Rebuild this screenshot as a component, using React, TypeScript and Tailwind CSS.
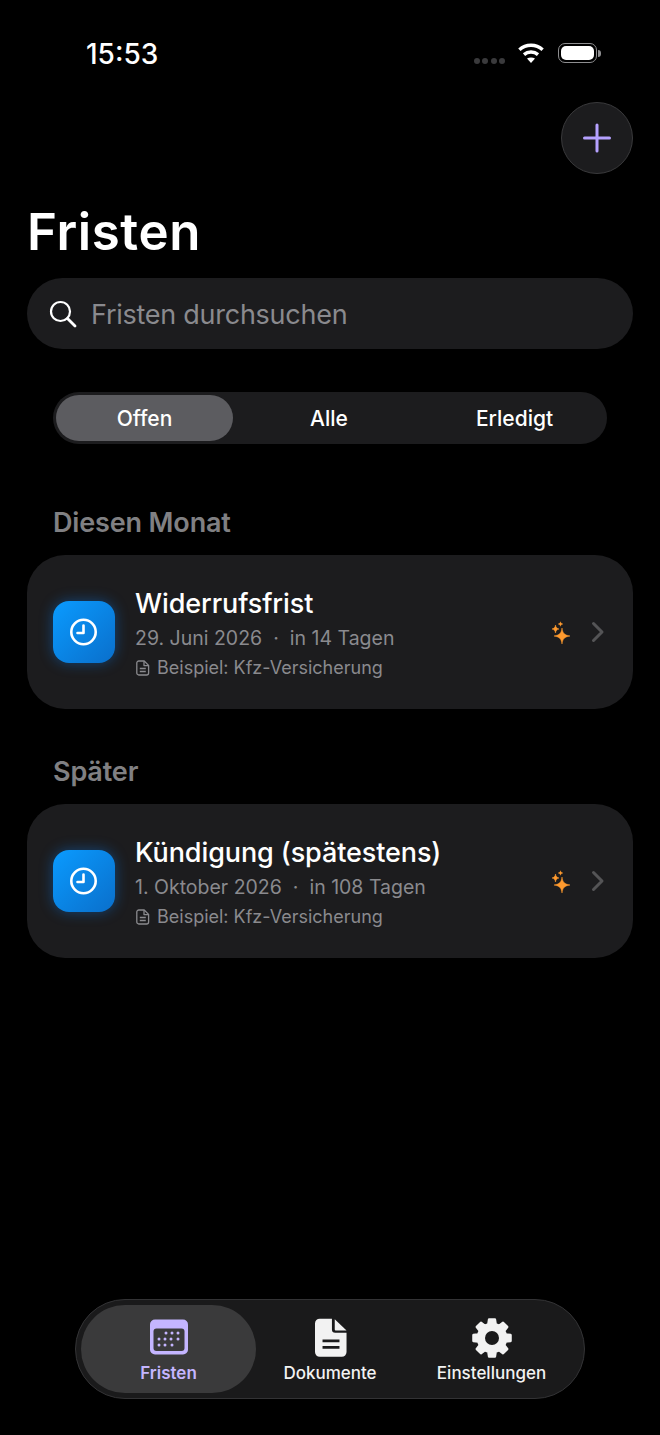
import React from "react";

const font = { fontFamily: "Inter, 'Liberation Sans', sans-serif" };

function Sparkle() {
  return (
    <svg width="20" height="24" viewBox="0 0 20 24" fill="#ff9a2e" stroke="#ff9a2e" strokeWidth="0.5" strokeLinejoin="round" className="mt-[2px]">
      <path d="M11 7 C11.8 12 13 14 19 15 C13 16 11.8 18 11 23 C10.2 18 9 16 3 15 C9 14 10.2 12 11 7Z" />
      <path d="M4.5 4 C4.9 6.4 5.6 7.2 8 8 C5.6 8.8 4.9 9.6 4.5 12 C4.1 9.6 3.4 8.8 1 8 C3.4 7.2 4.1 6.4 4.5 4Z" />
      <path d="M9.5 0.8 C9.7 2 10.2 2.5 11.7 3 C10.2 3.5 9.7 4 9.5 5.2 C9.3 4 8.8 3.5 7.3 3 C8.8 2.5 9.3 2 9.5 0.8Z" />
    </svg>
  );
}

function gearPath() {
  const pt = (deg: number, r: number) => {
    const a = (deg * Math.PI) / 180;
    return `${(20 + r * Math.sin(a)).toFixed(2)} ${(20 - r * Math.cos(a)).toFixed(2)}`;
  };
  let d = "";
  for (let i = 0; i < 8; i++) {
    const c = i * 45;
    d += `${i === 0 ? "M" : "L"}${pt(c - 15, 14.2)} L${pt(c - 9, 18.8)} L${pt(c + 9, 18.8)} L${pt(c + 15, 14.2)} `;
  }
  return d + "Z";
}

function Card({ title, date, rel }: { title: string; date: string; rel: string }) {
  return (
    <div className="h-[154px] mx-[27px] rounded-[38px] bg-[#1c1c1e] flex items-center pl-[26px] pr-[28px]">
      <div className="w-[62px] h-[62px] rounded-[16px] bg-gradient-to-br from-[#0a9bff] to-[#0a6fcb] shadow-[0_0_14px_rgba(10,132,255,0.4)] flex items-center justify-center shrink-0">
        <svg width="30" height="30" viewBox="0 0 30 30" fill="none" stroke="#fff" strokeWidth="2.6" strokeLinecap="round" strokeLinejoin="round">
          <circle cx="14.5" cy="15" r="12.2" />
          <path d="M14.5 8.5V16H8.5" />
        </svg>
      </div>
      <div className="ml-[20px] flex-1 min-w-0 flex flex-col pt-[5px]">
        <div className="text-[27px] leading-[34px] font-medium text-white tracking-[-0.1px]">{title}</div>
        <div className="text-[19.5px] leading-[28px] mt-[2.5px] text-[#8a8a8e] whitespace-pre">{date}{"  ·  "}{rel}</div>
        <div className="flex items-center mt-[2.5px] text-[18px] leading-[28px] text-[#8a8a8e]">
          <svg width="14" height="16" viewBox="0 0 14 16" fill="none" stroke="#8a8a8e" strokeWidth="1.3" strokeLinejoin="round" className="mr-[8px] ml-[1px]">
            <path d="M2.8 1h5.4L12.6 5.4V13a2 2 0 0 1-2 2H2.8a2 2 0 0 1-2-2V3a2 2 0 0 1 2-2Z" />
            <path d="M8 1.2V5.6h4.4M3.8 8.5h6M3.8 11.5h6" />
          </svg>
          <span className="-ml-[1px]">Beispiel: Kfz-Versicherung</span>
        </div>
      </div>
      <Sparkle />
      <svg width="14" height="22" viewBox="0 0 14 22" fill="none" stroke="#545456" strokeWidth="3" strokeLinecap="round" strokeLinejoin="round" className="ml-[20px]">
        <path d="M2.5 2.5 11 11 2.5 19.5" />
      </svg>
    </div>
  );
}

function Section({ label, children, top }: { label: string; children: React.ReactNode; top: string }) {
  return (
    <div className={top}>
      <div className="pl-[53px] text-[27px] leading-[34px] font-semibold text-[#808083] tracking-[-0.15px] mb-[15px]">{label}</div>
      {children}
    </div>
  );
}

export default function App() {
  return (
    <div style={font} className="w-[660px] h-[1435px] bg-black flex flex-col overflow-hidden">
      {/* status bar */}
      <div className="h-[102px] shrink-0 flex items-start justify-between pt-[36px] pl-[86px] pr-[59px]">
        <div className="text-[28px] leading-[36px] font-medium text-white">15:53</div>
        <div className="flex items-center h-[34px]">
          <div className="flex gap-[2.5px] mt-[15px] mr-[13px]">
            {[0, 1, 2, 3].map((i) => (
              <span key={i} className="w-[6px] h-[6px] rounded-full bg-[#3a3a3c]" />
            ))}
          </div>
          <svg width="26" height="20" viewBox="0 0 26 20" fill="none" stroke="#fff" strokeWidth="3.4" className="mr-[14px]">
            <path d="M1.4 6.8C7.8 0.8 18.2 0.8 24.6 6.8" />
            <path d="M6 11.6c3.9-3.4 10.1-3.4 14 0" />
            <path d="M13 20 9 15.6c2.3-1.5 5.7-1.5 8 0Z" fill="#fff" stroke="none" />
          </svg>
          <div className="w-[39px] h-[20px] rounded-[7px] border border-[#8e8e90] p-[2px]">
            <div className="w-full h-full rounded-[5px] bg-white" />
          </div>
          <div className="w-[3px] h-[7px] rounded-r-full bg-[#8e8e90] ml-[1px]" />
        </div>
      </div>

      {/* add button */}
      <div className="flex justify-end pr-[27px] shrink-0">
        <div className="w-[72px] h-[72px] rounded-full bg-[#1c1c1e] border border-[#3a3a3c] flex items-center justify-center">
          <svg width="30" height="30" viewBox="0 0 30 30" stroke="#b5a1ff" strokeWidth="3" strokeLinecap="round">
            <path d="M15 2V28M2.5 15H27.5" />
          </svg>
        </div>
      </div>

      <h1 className="pl-[27px] mt-[28px] text-[51px] leading-[60px] font-semibold text-white tracking-[0.6px] shrink-0">Fristen</h1>

      {/* search */}
      <div className="mx-[27px] mt-[16px] h-[71px] rounded-[36px] bg-[#1c1c1e] flex items-center pl-[22px] shrink-0">
        <svg width="28" height="28" viewBox="0 0 28 28" fill="none" stroke="#fff" strokeWidth="2.2" strokeLinecap="round">
          <circle cx="11.5" cy="11.5" r="9.5" />
          <path d="M18.5 18.5 26 26" strokeWidth="2.8" />
        </svg>
        <span className="ml-[14px] pt-[2px] text-[27px] leading-[34px] tracking-[-0.26px] text-[#8a8a8e]">Fristen durchsuchen</span>
      </div>

      {/* segmented */}
      <div className="mx-[53px] mt-[43px] h-[52px] rounded-[26px] bg-[#1c1c1e] flex items-center px-[3px] text-[21px] leading-[28px] font-medium text-white shrink-0">
        <div className="w-[177px] h-[46px] pt-[1px] rounded-[23px] bg-[#5c5c60] flex items-center justify-center">Offen</div>
        <div className="w-[192px] pt-[1px] text-center">Alle</div>
        <div className="flex-1 pt-[1px] text-center">Erledigt</div>
      </div>

      <Section label="Diesen Monat" top="mt-[62px]">
        <Card title="Widerrufsfrist" date="29. Juni 2026" rel="in 14 Tagen" />
      </Section>
      <Section label="Später" top="mt-[46px]">
        <Card title="Kündigung (spätestens)" date="1. Oktober 2026" rel="in 108 Tagen" />
      </Section>

      {/* tab bar */}
      <div className="mt-auto mb-[36px] mx-[75px] h-[100px] rounded-[50px] bg-[#1a1a1b] border border-[#333335] flex items-center px-[5px] shrink-0">
        <div className="w-[175px] h-[88px] rounded-[44px] bg-[#3a3a3b] flex flex-col items-center pt-[14px]">
          <svg width="38" height="36" viewBox="0 0 38 36">
            <rect x="0" y="0.5" width="38" height="35" rx="5" fill="#c4b5ff" />
            <rect x="3.5" y="9.5" width="31" height="22.5" rx="3" fill="#3a3a3b" />
            {[[16,14],[22,14],[28,14],[9,20],[15,20],[21,20],[28,20],[9,26],[15,26],[22,26]].map(([x, y], i) => (
              <circle key={i} cx={x} cy={y} r="1.5" fill="#c4b5ff" />
            ))}
          </svg>
          <div className="text-[17px] leading-[22px] mt-[7px] font-semibold text-[#c4b5ff]">Fristen</div>
        </div>
        <div className="w-[148px] h-[88px] flex flex-col items-center pt-[13px]">
          <svg width="32" height="40" viewBox="0 0 34 42" className="ml-[2px]">
            <path d="M5 0.5H18V12a3.5 3.5 0 0 0 3.5 3.5H33.5V36a5 5 0 0 1-5 5H5a5 5 0 0 1-5-5V5.5a5 5 0 0 1 5-5Z" fill="#f2f2f2" />
            <path d="M21 1 33.5 13H22a1 1 0 0 1-1-1Z" fill="#f2f2f2" />
            <path d="M8 24H26M8 31H26" stroke="#1a1a1b" strokeWidth="3" />
          </svg>
          <div className="text-[17px] leading-[22px] mt-[4px] font-medium text-[#f2f2f2]">Dokumente</div>
        </div>
        <div className="flex-1 h-[88px] flex flex-col items-center pt-[13px]">
          <svg width="40" height="40" viewBox="0 0 40 40">
            <path d={gearPath()} fill="#f2f2f2" stroke="#f2f2f2" strokeWidth="2.4" strokeLinejoin="round" />
            <circle cx="20" cy="20" r="7" fill="#1a1a1b" />
          </svg>
          <div className="text-[17px] leading-[22px] mt-[4px] font-medium text-[#f2f2f2]">Einstellungen</div>
        </div>
      </div>
    </div>
  );
}
